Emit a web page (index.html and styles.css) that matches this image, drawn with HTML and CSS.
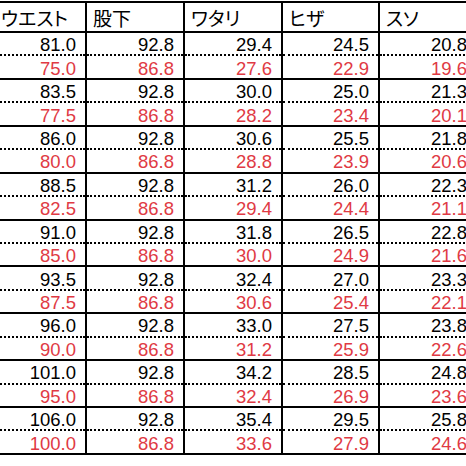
FILE: index.html
```html
<!DOCTYPE html>
<html lang="ja">
<head>
<meta charset="utf-8">
<link rel="stylesheet" href="styles.css">
</head>
<body>
<table class="size-table">
  <colgroup>
    <col class="c1"><col class="c2"><col class="c3"><col class="c4"><col class="c5">
  </colgroup>
  <thead>
    <tr class="head"><th>ウエスト</th><th>股下</th><th>ワタリ</th><th>ヒザ</th><th>スソ</th></tr>
  </thead>
  <tbody>
    <tr class="a"><td>81.0</td><td>92.8</td><td>29.4</td><td>24.5</td><td>20.8</td></tr>
    <tr class="b"><td>75.0</td><td>86.8</td><td>27.6</td><td>22.9</td><td>19.6</td></tr>
    <tr class="a"><td>83.5</td><td>92.8</td><td>30.0</td><td>25.0</td><td>21.3</td></tr>
    <tr class="b"><td>77.5</td><td>86.8</td><td>28.2</td><td>23.4</td><td>20.1</td></tr>
    <tr class="a"><td>86.0</td><td>92.8</td><td>30.6</td><td>25.5</td><td>21.8</td></tr>
    <tr class="b"><td>80.0</td><td>86.8</td><td>28.8</td><td>23.9</td><td>20.6</td></tr>
    <tr class="a"><td>88.5</td><td>92.8</td><td>31.2</td><td>26.0</td><td>22.3</td></tr>
    <tr class="b"><td>82.5</td><td>86.8</td><td>29.4</td><td>24.4</td><td>21.1</td></tr>
    <tr class="a"><td>91.0</td><td>92.8</td><td>31.8</td><td>26.5</td><td>22.8</td></tr>
    <tr class="b"><td>85.0</td><td>86.8</td><td>30.0</td><td>24.9</td><td>21.6</td></tr>
    <tr class="a"><td>93.5</td><td>92.8</td><td>32.4</td><td>27.0</td><td>23.3</td></tr>
    <tr class="b"><td>87.5</td><td>86.8</td><td>30.6</td><td>25.4</td><td>22.1</td></tr>
    <tr class="a"><td>96.0</td><td>92.8</td><td>33.0</td><td>27.5</td><td>23.8</td></tr>
    <tr class="b"><td>90.0</td><td>86.8</td><td>31.2</td><td>25.9</td><td>22.6</td></tr>
    <tr class="a"><td>101.0</td><td>92.8</td><td>34.2</td><td>28.5</td><td>24.8</td></tr>
    <tr class="b"><td>95.0</td><td>86.8</td><td>32.4</td><td>26.9</td><td>23.6</td></tr>
    <tr class="a"><td>106.0</td><td>92.8</td><td>35.4</td><td>29.5</td><td>25.8</td></tr>
    <tr class="b"><td>100.0</td><td>86.8</td><td>33.6</td><td>27.9</td><td>24.6</td></tr>
  </tbody>
</table>
</body>
</html>
```
FILE: styles.css
```css
html, body {
  margin: 0;
  padding: 0;
  background: #ffffff;
  overflow: hidden;
}

.size-table {
  border-collapse: collapse;
  table-layout: fixed;
  width: 489px;
  margin-left: -13px;
  margin-top: 1px;
  font-family: "Liberation Sans", Arial, sans-serif;
  color: #000000;
}

.c1, .c2, .c3, .c5 { width: 98px; }
.c4 { width: 97px; }

.size-table th,
.size-table td {
  border-left: 2px solid #000;
  border-right: 2px solid #000;
  padding: 0;
  overflow: hidden;
  white-space: nowrap;
}

.head {
  height: 30px;
}

.head th {
  border-top: 2px solid #000;
  border-bottom: 2px solid #000;
  text-align: left;
  font-family: "Noto Sans CJK JP", "Liberation Sans", sans-serif;
  font-feature-settings: "palt";
  font-weight: 400;
  font-size: 19px;
  line-height: 20px;
  padding: 1px 0 0 6px;
}

.head th:first-child {
  padding-left: 12px;
}

.size-table td {
  text-align: right;
  font-size: 18.5px;
  line-height: 18px;
  padding: 3px 9px 0 0;
}

.a, .b {
  height: 23.45px;
}

.a td {
  border-bottom: 2px dotted #000;
}

.b td {
  border-bottom: 2px solid #000;
  color: #e03a44;
}
```
